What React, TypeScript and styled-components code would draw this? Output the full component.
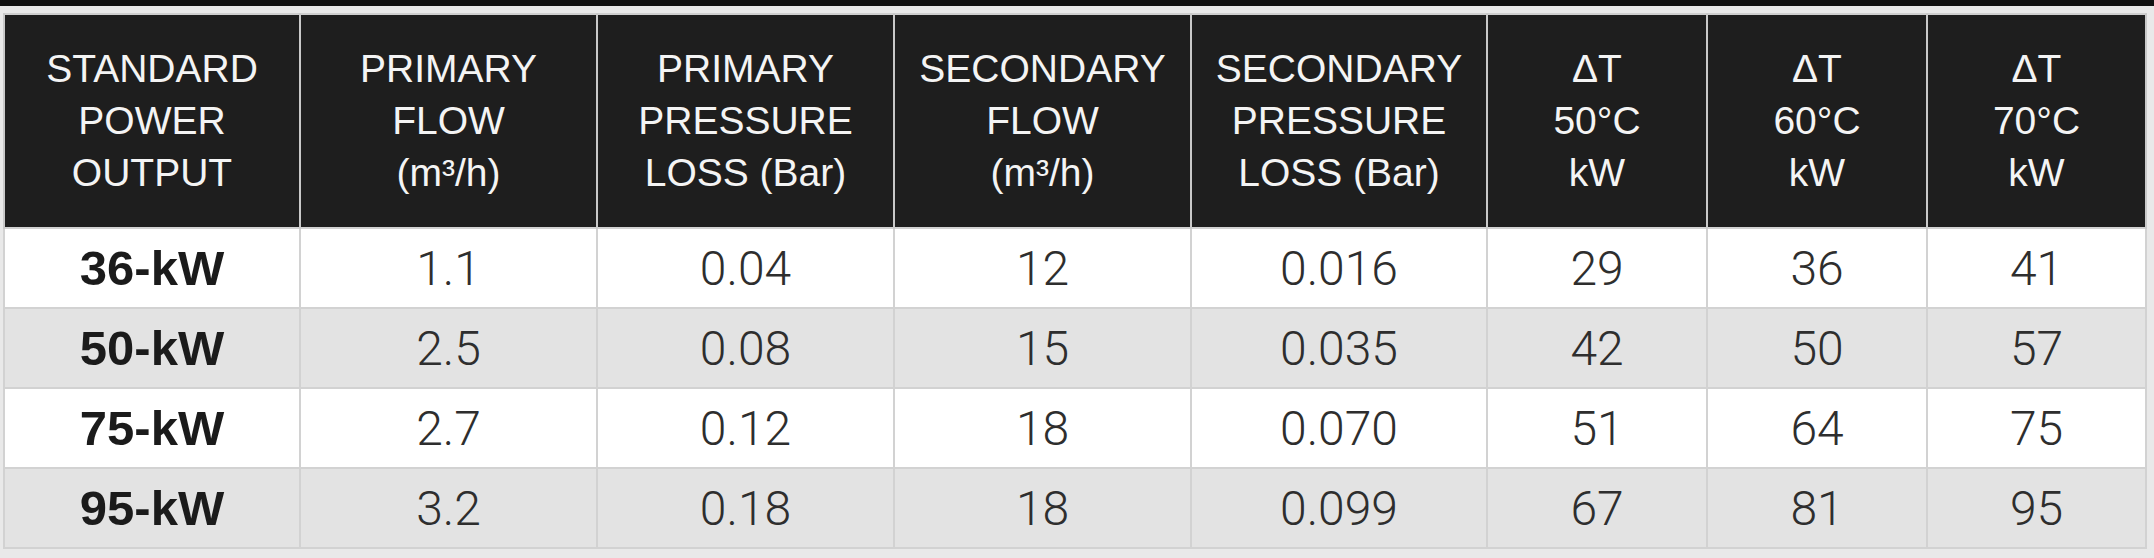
import styled, { createGlobalStyle } from "styled-components";

const GlobalStyle = createGlobalStyle`
  html, body {
    margin: 0;
    padding: 0;
    background: #e9e9e9;
  }
`;

const TopStrip = styled.div`
  height: 6px;
  background-color: #111;
`;

const Wrapper = styled.div`
  padding: 7px 0 9px 3px;
`;

const SpecTable = styled.table`
  border-collapse: collapse;
  table-layout: fixed;
  width: 2142px;
  border: solid 2px #cfcfcf;
`;

const HeadCell = styled.th`
  height: 212px;
  padding: 0;
  background-color: #1e1e1e;
  color: #f4f4f4;
  border-left: solid 2px #c9c9c9;
  border-right: solid 2px #c9c9c9;
  font-family: "Liberation Sans", Arial, sans-serif;
  font-size: 39px;
  font-weight: 400;
  line-height: 52px;
  text-align: center;
  vertical-align: middle;
  white-space: pre-line;
`;

const Row = styled.tr<{ $shaded: boolean }>`
  background-color: ${(p) => (p.$shaded ? "#e3e3e3" : "#ffffff")};
`;

const Cell = styled.td<{ $label?: boolean }>`
  height: 78px;
  padding: 0;
  border: solid 2px #d2d2d2;
  text-align: center;
  vertical-align: middle;
  color: ${(p) => (p.$label ? "#1b1b1b" : "#2e2e2e")};
  font-family: ${(p) =>
    p.$label ? `"Liberation Sans", Arial, sans-serif` : `Roboto, "Liberation Sans", sans-serif`};
  font-size: ${(p) => (p.$label ? "49px" : "48px")};
  font-weight: ${(p) => (p.$label ? 700 : 300)};
`;

const widths = [296, 297, 297, 297, 296, 220, 220, 219];

const headers = [
  "STANDARD\nPOWER\nOUTPUT",
  "PRIMARY\nFLOW\n(m³/h)",
  "PRIMARY\nPRESSURE\nLOSS (Bar)",
  "SECONDARY\nFLOW\n(m³/h)",
  "SECONDARY\nPRESSURE\nLOSS (Bar)",
  "ΔT\n50°C\nkW",
  "ΔT\n60°C\nkW",
  "ΔT\n70°C\nkW",
];

const rows = [
  ["36-kW", "1.1", "0.04", "12", "0.016", "29", "36", "41"],
  ["50-kW", "2.5", "0.08", "15", "0.035", "42", "50", "57"],
  ["75-kW", "2.7", "0.12", "18", "0.070", "51", "64", "75"],
  ["95-kW", "3.2", "0.18", "18", "0.099", "67", "81", "95"],
];

export default function App() {
  return (
    <>
      <GlobalStyle />
      <TopStrip />
      <Wrapper>
        <SpecTable>
          <colgroup>
            {widths.map((w, i) => (
              <col key={i} style={{ width: w }} />
            ))}
          </colgroup>
          <thead>
            <tr>
              {headers.map((h) => (
                <HeadCell key={h}>{h}</HeadCell>
              ))}
            </tr>
          </thead>
          <tbody>
            {rows.map((r, i) => (
              <Row key={r[0]} $shaded={i % 2 === 1}>
                {r.map((v, j) => (
                  <Cell key={j} $label={j === 0}>
                    {v}
                  </Cell>
                ))}
              </Row>
            ))}
          </tbody>
        </SpecTable>
      </Wrapper>
    </>
  );
}
